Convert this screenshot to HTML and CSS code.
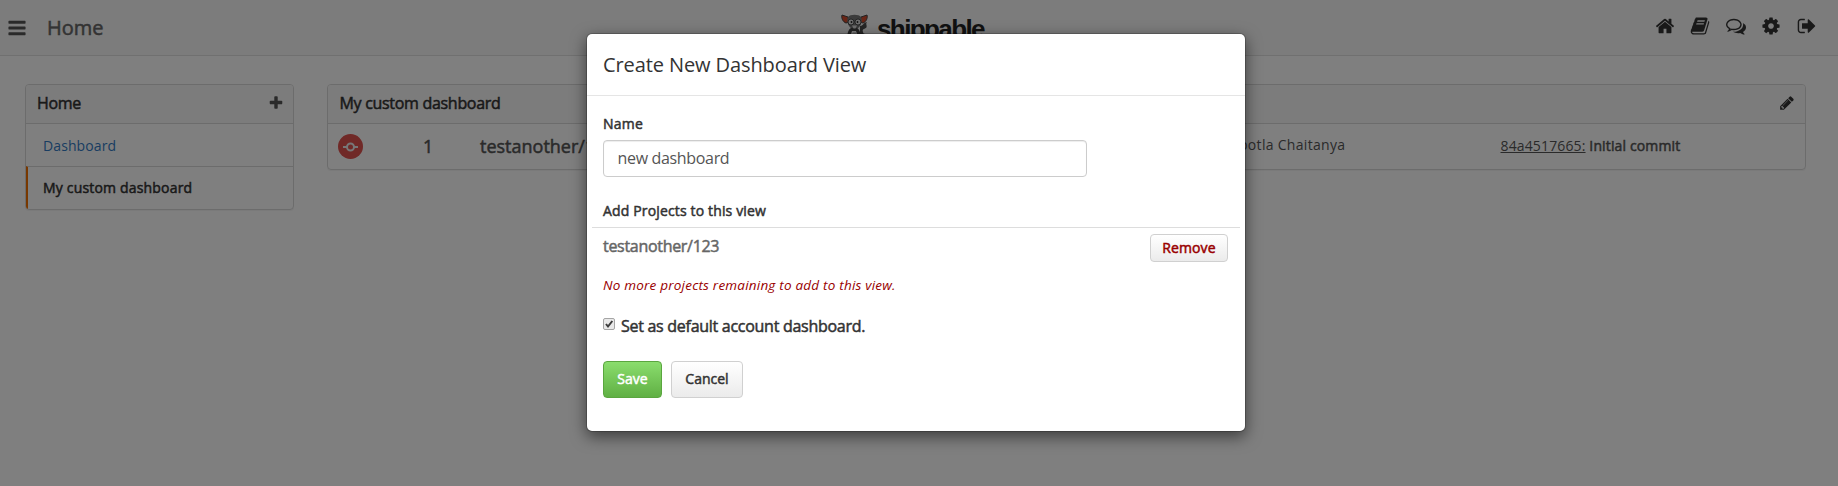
FILE: index.html
```
<!DOCTYPE html>
<html lang="en">
<head>
<meta charset="utf-8">
<title>Home</title>
<link rel="stylesheet" href="styles.css">
</head>
<body>
<header class="topbar">
  <div class="topbar-left">
    <svg class="icon-lg bars" viewBox="0 0 1792 1792"><path d="M1664 1344v128q0 26-19 45t-45 19H192q-26 0-45-19t-19-45v-128q0-26 19-45t45-19h1408q26 0 45 19t19 45zm0-512v128q0 26-19 45t-45 19H192q-26 0-45-19t-19-45V832q0-26 19-45t45-19h1408q26 0 45 19t19 45zm0-512v128q0 26-19 45t-45 19H192q-26 0-45-19t-19-45V320q0-26 19-45t45-19h1408q26 0 45 19t19 45z"/></svg>
    <span class="page-title heavy">Home</span>
  </div>
  <div class="brand">
    <svg class="mascot" viewBox="0 0 28 24">
      <path d="M19 12c3 0 4-4 7-4-2 2 1 4-1 6-2 1-4 1-3 4 0 2 2 2 4 2-2 3-6 3-7 0z" fill="#4b4b4b"/>
      <path d="M1 1l6 2 1 5-3 1C2 8 0 4 1 1zM26 1l-6 2-1 5 3 1c3-1 5-5 4-8z" fill="#d34a2c" stroke="#444"/>
      <path d="M7 3c2-3 11-3 13 0 2 4 0 9-4 12h-5C7 12 5 7 7 3z" fill="#777"/>
      <path d="M10 14c-3 2-3 4-4 9h3l2-6h4l2 6h3c-1-5-1-7-4-9z" fill="#444"/>
      <path d="M12 18h3l2 6h-7z" fill="#ccc"/>
      <circle cx="10" cy="8" r="3" fill="#ddd" stroke="#333" stroke-width=".8"/>
      <circle cx="17" cy="8" r="3" fill="#ddd" stroke="#333" stroke-width=".8"/>
      <circle cx="10.500" cy="8" r=".9" fill="#222"/><circle cx="16.500" cy="8" r=".9" fill="#222"/>
      <path d="M11 11.500h5l-1.500 3h-2z" fill="#ddd"/>
    </svg>
    <span class="brand-name">shippable</span>
  </div>
  <nav class="topnav">
    <svg class="icon-lg" viewBox="0 0 1792 1792"><path d="M1472 992v480q0 26-19 45t-45 19h-384v-384H768v384H384q-26 0-45-19t-19-45V992q0-1 .5-3t.5-3l575-474 575 474q1 2 1 6zm223-69l-62 74q-8 9-21 11h-3q-13 0-21-7L896 424l-692 577q-12 8-24 7-13-2-21-11l-62-74q-8-10-7-23.500t11-21.500l719-599q32-26 76-26t76 26l244 204V288q0-14 9-23t23-9h192q14 0 23 9t9 23v408l219 182q10 8 11 21.500t-7 23.500z"/></svg>
    <svg class="icon-lg" viewBox="0 0 1792 1792"><path d="M1703 478q40 57 18 129l-275 906q-19 64-76.500 107.500T1247 1664H324q-77 0-148.500-53.500T76 1479q-24-67-2-127 0-4 3-27t4-37q1-8-3-21.500t-3-19.500q2-11 8-21t16.500-23.500T116 1179q23-38 45-91.500t30-91.500q3-10 .5-30t-.5-28q3-11 17-28t17-23q21-36 42-92t25-90q1-9-2.500-32t.5-28q4-13 22-30.500t22-22.500q19-26 42.500-84.500T404 411q1-8-3-25.500t-2-26.500q2-8 9-18t18-23 17-21q8-12 16.500-30.500t15-35 16-36 19.500-32T537.500 139.500t36-11.500T621 134l-1 3q38-9 51-9h761q74 0 114 56t18 130l-274 906q-36 119-71.500 153.500T1090 1408H221q-27 0-38 15-11 16-1 43 24 70 144 70h923q29 0 56-15.500t35-41.500l300-987q7-22 5-57 38 15 59 43zm-1064 2q-4 13 2 22.500t20 9.500h608q13 0 25.500-9.500T1311 480l21-64q4-13-2-22.500t-20-9.500H702q-13 0-25.500 9.500T660 416zm-83 256q-4 13 2 22.500t20 9.500h608q13 0 25.500-9.500T1228 736l21-64q4-13-2-22.500t-20-9.500H619q-13 0-25.500 9.500T577 672z"/></svg>
    <svg class="icon-lg" viewBox="0 0 1792 1792"><path d="M704 384q-153 0-286 52T206.500 577 128 768q0 82 53 158t149 132l97 56-35 84q34-20 62-39l44-31 53 10q78 14 153 14 153 0 286-52t211.500-141 78.500-191-78.500-191T990 436 704 384zm0-128q191 0 353.500 68.500t256.500 186.500 94 257-94 257-256.500 186.500T704 1280q-86 0-176-16-124 88-278 128-36 9-86 16h-3q-11 0-20.500-8t-11.500-21q-1-3-1-6.500t.5-6.500 2-6l2.500-5 3.500-5.500 4-5 4.500-5 4-4.500q5-6 23-25t26-29.500 22.500-29 25-38.500 20.500-44q-124-72-195-177T0 768q0-139 94-257t256.500-186.500T704 256zm822 1169q10 24 20.500 44t25 38.500 22.500 29 26 29.500 23 25q1 1 4 4.500t4.500 5 4 5 3.500 5.500l2.500 5 2 6 .5 6.500-1 6.500q-3 14-13 22t-22 7q-50-7-86-16-154-40-278-128-90 16-176 16-271 0-472-132 58 4 88 4 161 0 309-45t264-129q125-92 192-212t67-254q0-77-23-152 129 71 204 178t75 230q0 120-71 224.500T1526 1425z"/></svg>
    <svg class="icon-lg" viewBox="0 0 1792 1792"><path d="M1152 896q0-106-75-181t-181-75-181 75-75 181 75 181 181 75 181-75 75-181zm512-109v222q0 12-8 23t-20 13l-185 28q-19 54-39 91 35 50 107 138 10 12 10 25t-9 23q-27 37-99 108t-94 71q-12 0-26-9l-138-108q-44 23-91 38-16 136-29 186-7 28-36 28H785q-14 0-24.500-8.500T749 1642l-28-184q-49-16-90-37l-141 107q-10 9-25 9-14 0-25-11-126-114-165-168-7-10-7-23 0-12 8-23 15-21 51-66.500t54-70.500q-27-50-41-99l-183-27q-13-2-21-12.500t-8-23.500V791q0-12 8-23t19-13l186-28q14-46 39-92-40-57-107-138-10-12-10-24 0-10 9-23 26-36 98.500-107.500T465 263q13 0 26 10l138 107q44-23 91-38 16-136 29-186 7-28 36-28h222q14 0 24.500 8.500T1043 158l28 184q49 16 90 37l142-107q9-9 24-9 13 0 25 10 129 119 165 170 7 8 7 22 0 12-8 23-15 21-51 66.500t-54 70.500q26 50 41 98l183 28q13 2 21 12.500t8 23.500z"/></svg>
    <svg class="icon-lg" viewBox="0 0 1792 1792"><path d="M704 1440q0 4 1 20t.5 26.500-3 23.500-10 19.500-20.500 6.500H352q-119 0-203.500-84.500T64 1248V544q0-119 84.500-203.500T352 256h320q13 0 22.500 9.500T704 288q0 4 1 20t.5 26.500-3 23.500-10 19.500T672 384H352q-66 0-113 47t-47 113v704q0 66 47 113t113 47h312l11.500 1 11.500 3 8 5.500 7 9 2 13.500zm928-544q0 26-19 45l-544 544q-19 19-45 19t-45-19-19-45v-288H512q-26 0-45-19t-19-45V704q0-26 19-45t45-19h448V352q0-26 19-45t45-19 45 19l544 544q19 19 19 45z"/></svg>
  </nav>
</header>
<main class="content">
  <aside class="panel sidebar">
    <div class="panel-heading">
      <span class="heavy">Home</span>
      <svg class="icon-md plus" viewBox="0 0 1792 1792"><path d="M1600 736v192q0 40-28 68t-68 28h-416v416q0 40-28 68t-68 28H800q-40 0-68-28t-28-68v-416H288q-40 0-68-28t-28-68V736q0-40 28-68t68-28h416V224q0-40 28-68t68-28h192q40 0 68 28t28 68v416h416q40 0 68 28t28 68z"/></svg>
    </div>
    <a class="side-item link">Dashboard</a>
    <a class="side-item active heavy">My custom dashboard</a>
  </aside>
  <section class="panel board">
    <div class="panel-heading">
      <span class="heavy">My custom dashboard</span>
      <svg class="icon-md" viewBox="0 0 1792 1792"><path d="M491 1536l91-91-235-235-91 91v107h128v128h107zm523-928q0-22-22-22-10 0-17 7l-542 542q-7 7-7 17 0 22 22 22 10 0 17-7l542-542q7-7 7-17zm-54-192l416 416-832 832H128v-416zm683 96q0 53-37 90l-166 166-416-416 166-165q36-38 90-38 53 0 91 38l235 234q37 39 37 91z"/></svg>
    </div>
    <div class="build-row">
      <svg class="status" viewBox="0 0 25 25"><circle cx="12.500" cy="12.500" r="12.500" fill="#e0524e"/><path d="M5 13h4M16 13h4" stroke="#eee" stroke-width="2"/><circle cx="12.500" cy="13" r="3.500" fill="none" stroke="#eee" stroke-width="2"/></svg>
      <span class="build-number heavy">1</span>
      <span class="build-project heavy">testanother/123</span>
      <span class="build-author">potla Chaitanya</span>
      <span class="build-commit"><u>84a4517665:</u> <span class="heavy">Initial commit</span></span>
    </div>
  </section>
</main>
<div class="backdrop">
  <form class="modal">
    <h4 class="modal-title">Create New Dashboard View</h4>
    <div class="modal-body">
      <label class="field-label heavy" for="view-name">Name</label>
      <input class="text-input" id="view-name" type="text" value="new dashboard">
      <div class="projects-label heavy">Add Projects to this view</div>
      <div class="project-row">
        <span class="project-name heavy">testanother/123</span>
        <button class="btn btn-remove heavy" type="button">Remove</button>
      </div>
      <em class="notice">No more projects remaining to add to this view.</em>
      <div class="default-row">
        <svg class="check" viewBox="0 0 12 12"><rect x=".5" y=".5" width="11" height="11" rx="1.500" fill="#e9e9e9" stroke="#a5a5a5"/><path d="M3 6l2 2.500L9.300 3" fill="none" stroke="#3c3c3c" stroke-width="2"/></svg>
        <span class="heavy">Set as default account dashboard.</span>
      </div>
      <div class="actions">
        <button class="btn btn-save heavy" type="button">Save</button>
        <button class="btn btn-cancel heavy" type="button">Cancel</button>
      </div>
    </div>
  </form>
</div>
</body>
</html>
```
FILE: styles.css
```
* { box-sizing: border-box; }

body {
  margin: 0;
  height: 486px;
  overflow: hidden;
  background: #fff;
  color: #333;
  font: 14px/20px "Open Sans", sans-serif;
}

.heavy { -webkit-text-stroke: 0.5px currentColor; }

.icon-lg { width: 20px; height: 20px; fill: #333; }
.icon-md { width: 16px; height: 16px; fill: #333; }

.topbar {
  display: flex;
  align-items: flex-start;
  height: 56px;
  background: #f8f8f8;
  border-bottom: 1px solid #e0e0e0;
}
.topbar-left { display: flex; width: 841px; padding: 18px 0 0 7px; }
.bars { fill: #555; }
.page-title { margin-left: 20px; color: #666; font-size: 20px; line-height: 20px; }

.brand { display: flex; padding-top: 14px; }
.mascot { width: 28px; height: 24px; }
.brand-name {
  margin: 0 0 0 8px;
  color: #222;
  font: bold 26px/30px "Liberation Sans", sans-serif;
  letter-spacing: -1.600px;
}
.topnav { display: flex; gap: 15.500px; margin-left: auto; padding: 16px 21.500px 0 0; }

.content { display: flex; align-items: flex-start; gap: 33px; padding: 28px 32px 0 25px; }
.panel {
  overflow: hidden;
  border: 1px solid #d8d8d8;
  border-radius: 4px;
  box-shadow: 0 1px 1px rgba(0, 0, 0, .05);
}
.panel-heading {
  display: flex;
  align-items: center;
  justify-content: space-between;
  height: 39px;
  padding: 0 10px 2px 11.500px;
  background: #f8f8f8;
  border-bottom: 1px solid #d8d8d8;
  font-size: 16px;
  letter-spacing: -.3px;
}
.plus { fill: #555; }
.sidebar { width: 269px; }
.sidebar .panel-heading { padding-left: 11px; padding-right: 9px; }
.side-item { display: block; height: 42px; padding: 12px 0 0 17px; letter-spacing: .1px; }
.side-item + .side-item { height: 43px; border-top: 1px solid #d8d8d8; }
.side-item.active {
  padding: 11px 0 0 15px;
  border-left: 2px solid #f07000;
  letter-spacing: .18px;
}
.link { color: #337ac4; }

.board { flex: 1; }
.build-row {
  display: grid;
  grid-template-columns: 85px 57px 759px 261px 1fr;
  align-items: center;
  height: 45px;
  padding: 0 0 1px 10px;
  color: #555;
}
.status { width: 25px; height: 25px; }
.build-number, .build-project { padding-bottom: 1px; font-size: 18px; }
.build-author { padding-bottom: 2px; letter-spacing: .3px; }
.build-commit { padding-left: .5px; letter-spacing: .14px; }

.backdrop { position: absolute; inset: 0; overflow: hidden; background: rgba(0, 0, 0, .5); }
.modal {
  width: 660px;
  height: 399px;
  margin: 33px 0 0 586px;
  background: #fff;
  background-clip: padding-box;
  border: 1px solid rgba(0, 0, 0, .2);
  border-radius: 6px;
  box-shadow: 0 5px 15px rgba(0, 0, 0, .5);
}
.modal-title {
  height: 62px;
  margin: 0;
  padding: 17px 16px 0;
  border-bottom: 1px solid #e5e5e5;
  font-size: 20px;
  font-weight: 400;
  line-height: 28px;
  letter-spacing: -.1px;
}
.modal-body { display: flex; flex-direction: column; align-items: flex-start; padding: 18px 5px 0; }
.field-label { padding-left: 11px; letter-spacing: .2px; }
.text-input {
  width: 484px;
  height: 37px;
  margin: 6px 0 0 11px;
  padding: 0 13.500px 1px;
  border: 1px solid #ccc;
  border-radius: 4px;
  box-shadow: inset 0 1px 1px rgba(0, 0, 0, .075);
  color: #555;
  font: 16px "Open Sans", sans-serif;
  letter-spacing: -.33px;
}
.projects-label {
  align-self: stretch;
  margin-top: 24px;
  padding: 0 11px 6px;
  border-bottom: 1px solid #ddd;
  letter-spacing: .15px;
}
.project-row {
  display: flex;
  align-self: stretch;
  justify-content: space-between;
  align-items: flex-start;
  padding: 6px 12px 0 11px;
}
.project-name { padding-top: 2px; color: #666; font-size: 16px; letter-spacing: -.3px; }
.btn {
  border: 1px solid #d0d0d0;
  border-radius: 4px;
  background: linear-gradient(#fff, #ebebeb);
  color: #333;
  font: 14px/20px "Open Sans", sans-serif;
}
.btn-remove { width: 78px; height: 28px; padding: 0; color: #990000; letter-spacing: .1px; }
.notice { margin: 13px 0 0 11px; color: #990000; font-size: 13.500px; letter-spacing: .21px; }
.default-row { display: flex; gap: 6px; margin: 21px 0 0 11px; font-size: 16px; letter-spacing: -.28px; }
.check { width: 12px; height: 12px; margin-top: 2px; }
.actions { display: flex; gap: 9px; margin: 25px 0 0 11px; }
.btn-save {
  width: 59px;
  height: 37px;
  padding: 0 0 2px;
  border-color: #5aa63f;
  background: linear-gradient(#8add6d, #60b044);
  color: #fff;
}
.btn-cancel { width: 72px; height: 37px; padding: 0 0 2px; }
```
